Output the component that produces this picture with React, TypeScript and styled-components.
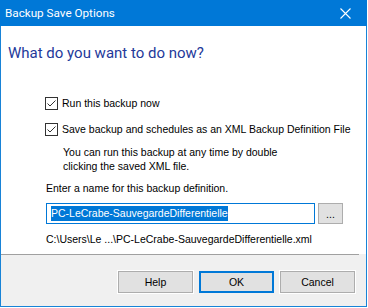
import React from "react";
import styled, { createGlobalStyle } from "styled-components";

const Global = createGlobalStyle`
  html, body { margin: 0; padding: 0; background: #ffffff; }
  body { font-family: "Liberation Sans", Arial, sans-serif; }
  * { box-sizing: border-box; }
`;

const Window = styled.div`
  width: 367px;
  height: 307px;
  display: flex;
  flex-direction: column;
  border: 1px solid #1883d7;
  border-top: none;
  background: #f0f0f0;
`;

const TitleBar = styled.div`
  height: 26px;
  flex: none;
  background: #0078d7;
  display: flex;
  align-items: center;
  margin: 0 -1px;
  padding-left: 5px;
`;

const Title = styled.div`
  flex: 1;
  color: #ffffff;
  font-family: Roboto, "Noto Sans", sans-serif;
  font-size: 11.7px;
  line-height: 16px;
`;

const CloseBox = styled.div`
  width: 26px;
  height: 26px;
  margin-right: 9px;
  display: flex;
  align-items: center;
  justify-content: center;
`;

const Content = styled.div`
  height: 228px;
  flex: none;
  background: #ffffff;
  padding: 17px 0 0 0;
  display: flex;
  flex-direction: column;
  font-size: 10.5px;
  color: #000;
`;

const Heading = styled.div`
  font-family: Roboto, "Noto Sans", sans-serif;
  font-size: 15px;
  line-height: 20px;
  color: #24399a;
  padding-left: 7px;
`;

const Block = styled.div<{ $top: number; $left: number }>`
  margin-top: ${(p) => p.$top}px;
  padding-left: ${(p) => p.$left}px;
`;

const CheckRow = styled.label`
  display: flex;
  align-items: center;
  gap: 4px;
  height: 16px;
  line-height: 16px;
  white-space: nowrap;
  svg { flex: none; }
`;

const Desc = styled.div`
  line-height: 14px;
  white-space: nowrap;
`;

const Line = styled.div`
  line-height: 16px;
  white-space: nowrap;
`;

const InputRow = styled.div`
  display: flex;
  gap: 3px;
  align-items: flex-start;
`;

const TextBox = styled.div`
  width: 269px;
  height: 21px;
  border: 1px solid #0078d7;
  background: #fff;
  padding: 2px 0 0 4px;
  line-height: 15px;
  white-space: nowrap;
`;

const Selected = styled.span`
  background: #0078d7;
  color: #fff;
  display: inline-block;
  height: 15px;
`;

const Button = styled.div<{ $w: number; $default?: boolean }>`
  flex: none;
  width: ${(p) => p.$w}px;
  height: ${(p) => (p.$w < 40 ? 21 : 22)}px;
  display: flex;
  align-items: center;
  justify-content: center;
  background: #e1e1e1;
  border: ${(p) => (p.$default ? "2px solid #0078d7" : "1px solid #adadad")};
  box-shadow: ${(p) => (p.$default ? "none" : "0 0 0 1px #ffffff")};
  font-size: 10.5px;
  line-height: 16px;
  color: #000;
`;

const Separator = styled.div`
  height: 1px;
  background: #a0a0a0;
  margin-right: 7px;
`;

const Footer = styled.div`
  flex: 1;
  display: flex;
  justify-content: flex-end;
  align-items: flex-start;
  gap: 6px;
  padding: 16px 11px 0 0;
`;

const CheckIcon = () => (
  <svg width="13" height="13" viewBox="0 0 13 13">
    <rect x="0.5" y="0.5" width="12" height="12" fill="#fff" stroke="#333" />
    <polyline points="2.5,6.5 5,9 10.5,3.5" fill="none" stroke="#333" strokeWidth="1" />
  </svg>
);

const CloseIcon = () => (
  <svg width="11" height="11" viewBox="0 0 11 11">
    <path d="M0.5 0.5 L10.5 10.5 M10.5 0.5 L0.5 10.5" stroke="#fff" strokeWidth="1.1" />
  </svg>
);

export default function App() {
  return (
    <>
      <Global />
      <Window>
        <TitleBar>
          <Title>Backup Save Options</Title>
          <CloseBox>
            <CloseIcon />
          </CloseBox>
        </TitleBar>
        <Content>
          <Heading>What do you want to do now?</Heading>
          <Block $top={32} $left={44}>
            <CheckRow>
              <CheckIcon />
              <span>Run this backup now</span>
            </CheckRow>
          </Block>
          <Block $top={10} $left={44}>
            <CheckRow>
              <CheckIcon />
              <span>Save backup and schedules as an XML Backup Definition File</span>
            </CheckRow>
          </Block>
          <Block $top={8} $left={62}>
            <Desc>You can run this backup at any time by double</Desc>
            <Desc>clicking the saved XML file.</Desc>
          </Block>
          <Block $top={7} $left={45}>
            <Line>Enter a name for this backup definition.</Line>
          </Block>
          <Block $top={7} $left={45}>
            <InputRow>
              <TextBox>
                <Selected>PC-LeCrabe-SauvegardeDifferentielle</Selected>
              </TextBox>
              <Button $w={25}>...</Button>
            </InputRow>
          </Block>
          <Block $top={7} $left={45}>
            <Line>C:\Users\Le ...\PC-LeCrabe-SauvegardeDifferentielle.xml</Line>
          </Block>
        </Content>
        <Separator />
        <Footer>
          <Button $w={75}>Help</Button>
          <Button $w={75} $default>
            OK
          </Button>
          <Button $w={75}>Cancel</Button>
        </Footer>
      </Window>
    </>
  );
}
